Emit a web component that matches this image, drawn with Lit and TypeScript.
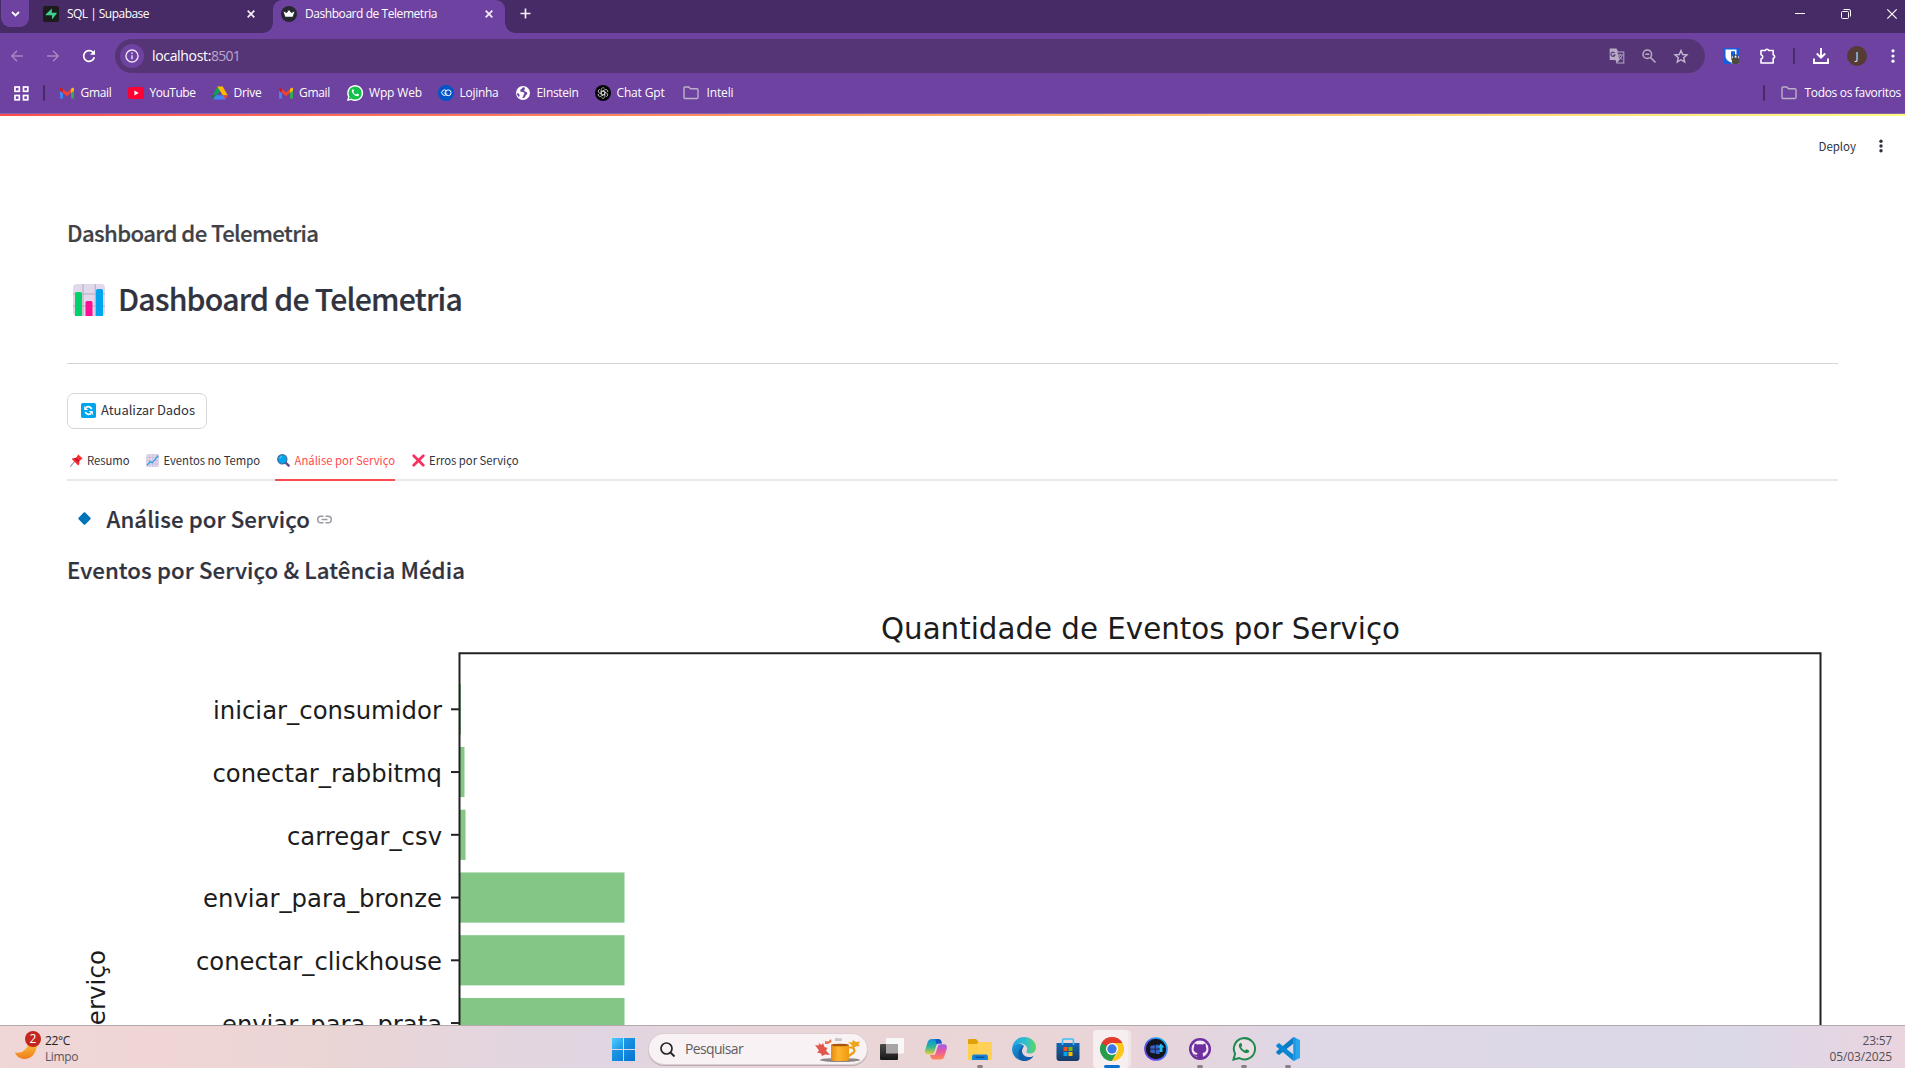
import { LitElement, html, svg, css } from "lit";
import { customElement, property } from "lit/decorators.js";

/** Single-line label whose tracking is tuned so that it spans a given width. */
@customElement("ui-label")
export class UiLabel extends LitElement {
  @property() text = "";
  @property({ type: Number }) span = 0;
  static styles = css`
    :host { display: inline-block; white-space: pre; flex: none; }
    .t { display: inline-block; }
  `;
  protected updated() {
    const el = this.renderRoot.querySelector(".t") as HTMLElement;
    if (!el || !this.span) return;
    el.style.letterSpacing = "0";
    const natural = el.getBoundingClientRect().width;
    const step = (this.span - natural) / Math.max(1, this.text.length);
    el.style.letterSpacing = step.toFixed(3) + "px";
  }
  render() {
    return html`<span class="t">${this.text}</span>`;
  }
}

const label = (text: string, span: number, cls = "") =>
  html`<ui-label class=${cls} .text=${text} .span=${span}></ui-label>`;

const box = (w: number, h: number, body: unknown, vb = `0 0 ${w} ${h}`) =>
  html`<svg class="ic" width=${w} height=${h} viewBox=${vb} fill="none">${body}</svg>`;

const closeX = box(8, 8, svg`<path d="M.7.7l6.600 6.600M7.300.7L.7 7.300" stroke="#f3eef8" stroke-width="1.700"/>`);

const gmail = box(16, 16, svg`
  <path d="M1 4v9.500h3V7.200z" fill="#4285f4"/><path d="M15 4v9.500h-3V7.200z" fill="#34a853"/>
  <path d="M1 3.600v2.200l3 2.300V4L3 3c-1-.6-2-.2-2 .6z" fill="#c5221f"/>
  <path d="M4 4l4 3.200L12 4v4.100l-4 3.100-4-3.100z" fill="#ea4335"/>
  <path d="M15 3.600v2.200l-3 2.300V4l1-1c1-.6 2-.2 2 .6z" fill="#fbbc04"/>`);
const youtube = box(16, 16, svg`<rect y="2" width="16" height="12" rx="2.800" fill="#ff0033"/><path d="M6.400 5.500v5L10.700 8z" fill="#fff"/>`);
const drive = box(16, 16, svg`
  <path d="M5.300 1.500h5.300L5.400 10.300.9 10.200z" fill="#0f9d58"/>
  <path d="M5.300 1.500h5.400l5 8.700h-5z" fill="#ffba00"/>
  <path d="M3.500 10.200h12.200L13.200 14.500H.9z" fill="#4285f4"/>
  <path d="M.9 10l2.600.2L.9 14.500-.2 12z" fill="#188038"/><path d="M10.700 10.200h5l-2.500 4.300z" fill="#ea4335"/>`);
const whatsapp = box(16, 16, svg`
  <path d="M0 16l1.100-4.200A8 8 0 1 1 4.200 15z" fill="#fff"/>
  <circle cx="8.100" cy="8" r="6.600" fill="#12c04a"/><path d="M1.700 14.400l.8-3 2.200 2.200z" fill="#12c04a"/>
  <path d="M5.700 4.300c-1.700 1.200-.8 3.300.9 5s4.100 2.900 5.300 1c.4-.8-.1-1-1.700-1.700-.6-.1-.7 1-1.300.8C7.600 8.900 6.700 8 6.400 7c0-.4.8-.8.7-1.200-.5-1.300-.6-1.700-1.400-1.500z" fill="#fff"/>`);
const lojinha = box(16, 16, svg`<circle cx="8" cy="8" r="8" fill="#0055c8"/>
  <path d="M8.600 6A2.700 2.700 0 1 0 8.300 9.600L9 8.500" stroke="#fff"/><circle cx="10.200" cy="7.800" r="2.900" stroke="#fff"/><path d="M5.800 8h2.600" stroke="#fff" stroke-width=".8"/>`);
const globe = box(16, 16, svg`<circle cx="8" cy="8" r="7" fill="#fff"/>
  <path d="M9 2c-2 .2-1.500 2-3 2.200-1 .3-1 2-.2 2.600 1.200.6 2.900-.2 3.500 1.300.3 1-.7 1.300-.8 2.100-.2 1.500-1 2-1.500 2.900 1.900.2 3.300-1 3.500-2.200.2-1 2-1.400 1.800-2.900-.3-1.600-2.300-1-3-2-.5-1 .8-1.600.6-2.500zM2 8c1.200.2 3 1.200 2.600 2.800-.3 1-1 1-1.300.6C2.500 10.500 2 9.400 2 8z" fill="#6e42a0"/>`);
const gpt = box(16, 16, svg`<circle cx="8" cy="8" r="8" fill="#050505"/>
  ${[0, 60, 120, 180, 240, 300].map(a => svg`<path d="M6.200 7V4.600a1.900 1.900 0 0 1 3.300-1.200M6.200 7L8 5.900l2.900 1.700" stroke="#d8d8d8" stroke-width=".75" transform="rotate(${a} 8 8)"/>`)}`);
const folder = box(16, 14, svg`<path d="M1 2.200C1 1.500 1.500 1 2.200 1h3.600l1.700 1.800h6.300c.7 0 1.200.5 1.200 1.200v7.300c0 .7-.5 1.200-1.200 1.200H2.200c-.7 0-1.200-.5-1.200-1.200z" stroke="#bdb0c9" stroke-width="1.400"/>`);

const BOOKMARKS = [
  { icon: gmail, text: "Gmail", at: 59, tx: 80.500, w: 31 },
  { icon: youtube, text: "YouTube", at: 128, tx: 149.500, w: 46 },
  { icon: drive, text: "Drive", at: 212, tx: 233.500, w: 28 },
  { icon: gmail, text: "Gmail", at: 278, tx: 299, w: 31 },
  { icon: whatsapp, text: "Wpp Web", at: 347, tx: 369, w: 53 },
  { icon: lojinha, text: "Lojinha", at: 438, tx: 459.500, w: 39 },
  { icon: globe, text: "EInstein", at: 515, tx: 536.500, w: 42 },
  { icon: gpt, text: "Chat Gpt", at: 595, tx: 616.500, w: 48 },
  { icon: folder, text: "Inteli", at: 683, tx: 706.500, w: 27 },
];

@customElement("browser-chrome")
export class BrowserChrome extends LitElement {
  static styles = css`
    :host { display: block; background: #6e42a0; color: #fff; font: 12px/16px "Open Sans", "Noto Sans", sans-serif; height: 113px; border-bottom: 1px solid #8a63b4; }
    .ic { display: block; flex: none; overflow: visible; }
    .strip { height: 33px; background: #462b66; display: flex; align-items: flex-start; }
    .drop { width: 28px; height: 27px; margin-left: 1px; border-radius: 0 0 9px 9px; background: #6e42a0; display: grid; place-items: center; }
    .tab { height: 27px; display: flex; align-items: center; }
    .idle { margin-left: 14px; width: 230px; }
    .idle ui-label { margin-left: 8px; }
    .idle .x { margin-left: 98px; }
    .active { position: relative; width: 232px; height: 33px; background: #6e42a0; border-radius: 9px 9px 0 0; align-items: flex-start; }
    .active::before, .active::after { content: ""; position: absolute; bottom: 0; width: 10px; height: 10px; }
    .active::before { left: -10px; background: radial-gradient(circle at 0 0, transparent 9.500px, #6e42a0 10px); }
    .active::after { right: -10px; background: radial-gradient(circle at 100% 0, transparent 9.500px, #6e42a0 10px); }
    .inner { height: 27px; display: flex; align-items: center; margin-left: 8px; }
    .inner ui-label { margin-left: 8px; }
    .inner .x { margin-left: 48px; }
    .plus { height: 26px; display: flex; align-items: center; margin-left: 14.500px; }
    .grow { flex: 1; }
    .win { height: 27px; display: flex; align-items: center; gap: 36px; padding-right: 8px; }
    .bar { height: 46px; display: flex; align-items: center; }
    .nav { display: flex; gap: 22px; margin-left: 10px; width: 105px; }
    .omni { width: 1590px; height: 34px; border-radius: 17px; background: #563577; display: flex; align-items: center; box-sizing: border-box; padding: 0 17px 0 5px; }
    .info { width: 24px; height: 24px; border-radius: 50%; background: #6e42a0; display: grid; place-items: center; margin-right: 8px; }
    .url { font-size: 14px; line-height: 20px; }
    .dim { color: #b9a5cc; }
    .oi { display: flex; align-items: center; gap: 17px; }
    .tools { display: flex; align-items: center; flex: 1; margin-left: 18px; }
    .sep { width: 2px; height: 16px; background: #462b66; border-radius: 1px; }
    .avatar { width: 20px; height: 20px; border-radius: 50%; background: #543b33; font-size: 11px; text-align: center; line-height: 20px; color: #eee; }
    .marks { height: 28px; display: grid; grid-template-columns: 59px 1fr auto; align-items: center; }
    .lead { display: flex; align-items: center; padding-left: 13.500px; gap: 14px; }
    .list { display: flex; align-items: center; }
    .mark { display: flex; align-items: center; }
    .all { display: flex; align-items: center; padding-right: 4px; gap: 8px; }
    .all .sep { margin-right: 8px; }
  `;
  render() {
    return html`
      <div class="strip">
        <div class="drop">${box(9, 6, svg`<path d="M1 1l3.500 3.500L8 1" stroke="#fff" stroke-width="1.800"/>`)}</div>
        <div class="tab idle">
          ${box(16, 16, svg`<rect width="16" height="16" rx="2" fill="#1c1c1c"/><path d="M8.800 2.500v4.200h4.200c.7 0 .9.6.6 1L9 13.500V9.300H3.500c-.7 0-1-.6-.6-1.100z" fill="#3ecf8e"/>`)}
          ${label("SQL | Supabase", 82)}<span class="x">${closeX}</span>
        </div>
        <div class="tab active"><div class="inner">
          ${box(16, 16, svg`<circle cx="8" cy="8" r="8" fill="#262730"/><path d="M2.500 5.500L5.700 7 8 4l2.300 3 3.200-1.500-1.800 5.200H4.300z" fill="#fff"/>`)}
          ${label("Dashboard de Telemetria", 132)}<span class="x">${closeX}</span>
        </div></div>
        <div class="plus">${box(11, 11, svg`<path d="M5.500.5v10M.5 5.500h10" stroke="#f3eef8" stroke-width="1.700"/>`)}</div>
        <div class="grow"></div>
        <div class="win">
          ${box(10, 10, svg`<path d="M0 4.500h10" stroke="#fff"/>`)}
          ${box(10, 10, svg`<rect x=".5" y="2.500" width="7" height="7" rx="1" stroke="#fff"/><path d="M2.500.5H8A1.500 1.500 0 0 1 9.500 2v5.500" stroke="#fff"/>`)}
          ${box(10, 10, svg`<path d="M.3.3l9.400 9.400M9.700.3L.3 9.700" stroke="#fff" stroke-width="1.200"/>`)}
        </div>
      </div>
      <div class="bar">
        <div class="nav">
          ${box(14, 14, svg`<path d="M13 7H2M7 1.800L1.800 7 7 12.200" stroke="#a486c4" stroke-width="1.500"/>`)}
          ${box(14, 14, svg`<path d="M1 7h11M7 1.800L12.200 7 7 12.200" stroke="#a486c4" stroke-width="1.500"/>`)}
          ${box(14, 14, svg`<path d="M12.300 8.300A5.400 5.400 0 1 1 10.900 3.200L12 4.300" stroke="#fff" stroke-width="1.700"/><path d="M13 .8v5H8z" fill="#fff"/>`)}
        </div>
        <div class="omni">
          <div class="info">${box(14, 14, svg`<circle cx="7" cy="7" r="6" stroke="#ece4f4" stroke-width="1.400"/><path d="M7 6.200v4M7 3.600v1.400" stroke="#ece4f4" stroke-width="1.400"/>`)}</div>
          ${label("localhost:", 59, "url")}${label("8501", 29, "url dim")}
          <div class="grow"></div>
          <div class="oi">
            ${box(16, 16, svg`<path d="M.7.5h6.800l1.500 3h6.300v12H7.500L6.500 12H.7z" fill="#b9abc6"/><path d="M8.500 4.500h5.800v9.900H8.200L10.500 12z" fill="#563577"/><path d="M5.700 5A2.100 2.100 0 1 0 6 7H4.200" stroke="#563577" stroke-width="1.100"/><path d="M9 7h5M11.500 6v1M10 7.500c.5 1.800 1.700 3 3.300 4M13 7.500c-.4 1.800-1.300 3-3 4" stroke="#b9abc6"/>`)}
            ${box(14, 14, svg`<circle cx="5.300" cy="5.300" r="4.300" stroke="#b9abc6" stroke-width="1.500"/><path d="M3.300 5.300h4M8.500 8.500l5 5" stroke="#b9abc6" stroke-width="1.600"/>`)}
            ${box(15, 15, svg`<path d="M8 1.500l1.700 4 4.300.4-3.300 2.800 1 4.300L8 10.700 4.300 13l1-4.300L2 5.900l4.300-.4z" stroke="#c3b6cf" stroke-width="1.400"/>`)}
          </div>
        </div>
        <div class="tools">
          ${box(16, 16, svg`<rect width="16" height="16" rx="1" fill="#175ddc"/><path d="M2.500 1.500h11V8c0 3.500-3 5.500-5.500 6.500C5.500 13.500 2.500 11.500 2.500 8z" fill="#fff"/><path d="M8 3.200h4V8c0 2-2 3.500-4 4.600z" fill="#175ddc"/><path d="M8.700 8.500h7.300v7.500H8.700z" fill="#fff"/><rect x="9" y="9.500" width="7" height="6.500" rx="1" fill="#4a4a42"/><path d="M10.700 10V8.700a1.800 1.800 0 0 1 3.600 0V10" stroke="#4a4a42" stroke-width="1.400"/>`)}
          <span style="width:21px"></span>
          ${box(16, 16, svg`<path d="M1 2.500h4.200a1.900 1.900 0 0 1 3.600 0h4.400v4.200a1.900 1.900 0 0 1 0 3.700V15H1v-4a2.200 2.200 0 0 0 0-4.300z" stroke="#fff" stroke-width="1.600" stroke-linejoin="round"/>`)}
          <span style="width:17px"></span><div class="sep"></div><span style="width:18px"></span>
          ${box(16, 16, svg`<path d="M8 0v9M3.800 5.500L8 9.700l4.200-4.200M1 10.500V15h14v-4.500" stroke="#fff" stroke-width="1.900"/>`)}
          <span style="width:18px"></span><div class="avatar">J</div>
          <span style="width:24px"></span>
          ${box(4, 14, svg`<circle cx="2" cy="1.800" r="1.600" fill="#fff"/><circle cx="2" cy="7" r="1.600" fill="#fff"/><circle cx="2" cy="12.200" r="1.600" fill="#fff"/>`)}
        </div>
      </div>
      <div class="marks">
        <div class="lead">
          ${box(15, 15, svg`${[[1, 1], [9.5, 1], [1, 9.5], [9.5, 9.5]].map(p => svg`<rect x=${p[0]} y=${p[1]} width="4.300" height="4.300" stroke="#fff" stroke-width="1.700"/>`)}`)}
          <div class="sep"></div>
        </div>
        <div class="list">
          ${BOOKMARKS.map((b, i) => {
            const next = BOOKMARKS[i + 1]?.at ?? b.tx + b.w;
            return html`<div class="mark" style="width:${next - b.at}px;gap:${b.tx - b.at - 16}px">${b.icon}${label(b.text, b.w)}</div>`;
          })}
        </div>
        <div class="all"><div class="sep"></div>${folder}${label("Todos os favoritos", 96.5)}</div>
      </div>`;
  }
}

const pin = box(13, 13, svg`<path d="M5.500 6.500L.3 12.700" stroke="#9b8fb0" stroke-width="1.100"/><path d="M8 .3l4.700 4.200-1.300.8-1.900 1.900-.3 3.300-1 .9L1.700 5l1-.7 3-.3 1.900-2.200z" fill="#f8312f"/><path d="M4 4.400l4.500 4.400.6-2.200L6 3.800z" fill="#ca0b4a"/>`);
const trend = box(13, 13, svg`<rect width="13" height="13" rx="1.500" fill="#e1d8ec"/><path d="M3.500 0v13M6.700 0v13M10 0v13M0 3.500h13M0 6.700h13M0 10h13" stroke="#c3b4d4" stroke-width=".6"/><path d="M1 11.500L4 7.600 6.300 8.800 12.300 1.500" stroke="#26a0e8" stroke-width="1.200"/>`);
const lens = box(13, 13, svg`<path d="M8.300 8.300l3.400 3.400" stroke="#6b4a86" stroke-width="2.400" stroke-linecap="round"/><circle cx="5.300" cy="5.300" r="4.600" fill="#00a6ed" stroke="#3b6c9e" stroke-width="1.200"/><path d="M2.700 4.600A3 3 0 0 1 5 2.500" stroke="#8fd8ff"/>`);
const cross = box(13, 13, svg`<path d="M1.700 1.700l9.600 9.600M11.300 1.700l-9.600 9.600" stroke="#f92f60" stroke-width="2.700" stroke-linecap="round"/>`);

const TABS = [
  { icon: pin, text: "Resumo", w: 42.5, lead: 3, gap: 4, width: 79, on: false },
  { icon: trend, text: "Eventos no Tempo", w: 96.5, lead: 0, gap: 4.5, width: 129, on: false },
  { icon: lens, text: "Análise por Serviço", w: 100.5, lead: 2, gap: 4.5, width: 120, on: true },
  { icon: cross, text: "Erros por Serviço", w: 89.5, lead: 16.5, gap: 4.5, width: 140, on: false },
];

const ROWS = [
  { name: "iniciar_consumidor", w: 228, end: 461 },
  { name: "conectar_rabbitmq", w: 228.500, end: 464.5 },
  { name: "carregar_csv", w: 154, end: 465.5 },
  { name: "enviar_para_bronze", w: 238, end: 624.5 },
  { name: "conectar_clickhouse", w: 245, end: 624.5 },
  { name: "enviar_para_prata", w: 219, end: 624.5 },
];

@customElement("telemetry-page")
export class TelemetryPage extends LitElement {
  static styles = css`
    :host { display: block; height: 911px; overflow: hidden; background: #fff; color: #31333f; font-family: "Noto Sans CJK JP", "Noto Sans", sans-serif; }
    .ic { display: block; flex: none; overflow: visible; }
    .glow { height: 2px; background: linear-gradient(90deg, #ff4b4b, #fffd80); }
    header { height: 59px; display: flex; align-items: center; justify-content: flex-end; padding-right: 22px; gap: 23px; font-size: 11.500px; line-height: 16px; }
    main { padding: 41px 67px 0; }
    .row { display: flex; align-items: center; }
    .head { font-weight: 500; -webkit-text-stroke: .2px currentColor; }
    .top { height: 33px; font-size: 22.200px; line-height: 33px; color: #414246; }
    h1, h2, h3 { margin: 0; font-weight: 500; }
    h1 { height: 40px; margin-top: 29px; font-size: 30.200px; line-height: 40px; padding-left: 6px; gap: 13px; }
    h1 .ic { margin-top: 3px; }
    hr { border: 0; height: 1px; margin: 45px 0 29px; background: #d6d6d9; }
    button { display: flex; align-items: center; gap: 5px; box-sizing: border-box; width: 140px; height: 36px; border: 1px solid #d6d6d9; border-radius: 7px; background: #fff; padding: 0 0 1px 13px; font: 13px/20px "Noto Sans CJK JP", sans-serif; color: #31333f; }
    button ui-label { margin-top: -2px; }
    .tabs { margin-top: 12px; height: 38px; display: flex; border-bottom: 2px solid #e9e9eb; font-size: 11.300px; line-height: 16px; }
    .tab { display: flex; align-items: center; box-sizing: border-box; height: 40px; padding-bottom: 2px; }
    .on { color: #ff4b4b; border-bottom: 2px solid #ff4b4b; padding-bottom: 0; }
    h2, h3 { font-size: 22.200px; }
    h2 { margin-top: 17px; height: 40px; line-height: 40px; padding-left: 11px; }
    h2 ui-label { margin: 0 7px 0 15.500px; }
    h2 .ic:last-child { margin-top: 2px; }
    h3 { margin-top: 11px; height: 40px; line-height: 40px; }
    .plot { display: block; margin-top: -1px; font-family: "DejaVu Sans", sans-serif; }
  `;
  render() {
    const y0 = 709.300, step = 62.750;
    return html`
      <div class="glow"></div>
      <header>${label("Deploy", 37.5)}${box(4, 14, svg`<circle cx="2" cy="2.300" r="1.700" fill="#31333f"/><circle cx="2" cy="7" r="1.700" fill="#31333f"/><circle cx="2" cy="11.700" r="1.700" fill="#31333f"/>`)}</header>
      <main>
        <div class="row head top">${label("Dashboard de Telemetria", 251.5)}</div>
        <h1 class="row head">
          ${box(32, 32, svg`<rect width="32" height="32" rx="4" fill="#e1d8ec"/><path d="M10 0v32M22.300 0v32M0 10h32M0 22h32" stroke="#b4acbc" stroke-width="1"/>
            <path d="M2 32V9.500Q2 8 3.500 8h4Q9 8 9 9.500V32z" fill="#00d26a"/><path d="M12.500 32V18.500q0-1.500 1.500-1.500h4q1.500 0 1.500 1.500V32z" fill="#fc0f92"/><path d="M23 32V6.500Q23 5 24.500 5h4Q30 5 30 6.500V32z" fill="#00a6ed"/>`)}
          ${label("Dashboard de Telemetria", 344)}
        </h1>
        <hr />
        <button>${box(15, 15, svg`<rect width="15" height="15" rx="1.800" fill="#00a6ed"/><path d="M4.300 8.800A3.600 3.600 0 0 0 10 10.500M10.700 6.200A3.600 3.600 0 0 0 5 4.500" stroke="#fff" stroke-width="1.700"/><path d="M3.200 3v4h4zM11.800 12V8h-4z" fill="#fff"/>`)}${label("Atualizar Dados", 94)}</button>
        <div class="tabs">
          ${TABS.map(t => html`<div class="tab ${t.on ? "on" : ""}" style="width:${t.width}px;padding-left:${t.lead}px;gap:${t.gap}px">${t.icon}${label(t.text, t.w)}</div>`)}
        </div>
        <h2 class="row head">
          ${box(13, 13, svg`<path d="M5.700.6q.8-.8 1.600 0l5.100 5.100q.8.8 0 1.600l-5.100 5.100q-.8.8-1.600 0L.6 7.300q-.8-.8 0-1.600z" fill="#0074ba"/>`)}
          ${label("Análise por Serviço", 203.5)}
          ${box(15, 9, svg`<path d="M6.500 1.200H4a3.300 3.300 0 0 0 0 6.600h2.500M8.500 1.200H11a3.300 3.300 0 0 1 0 6.600H8.500M4.500 4.500h6" stroke="#9a9ba2" stroke-width="1.500"/>`)}
        </h2>
        <h3 class="row head">${label("Eventos por Serviço & Latência Média", 398)}</h3>
        <svg class="plot" width="1771" height="437" viewBox="67 588 1771 437">
          <g fill="#1c1c1c" font-size="24.600">
            <text x="881" y="639" font-size="29.700" textLength="519" lengthAdjust="spacingAndGlyphs">Quantidade de Eventos por Serviço</text>
            <text transform="translate(105 950) rotate(-90)" text-anchor="end">Serviço</text>
            ${ROWS.map((r, i) => {
              const y = y0 + i * step;
              return svg`
                <rect x="459.500" y=${y - 25.1} width=${r.end - 459.5} height="50.200" fill="#83c686"/>
                <path d="M451 ${y}h8" stroke="#222" stroke-width="2"/>
                <text x="442" y=${y + 9.8} text-anchor="end" textLength=${r.w + 1} lengthAdjust="spacingAndGlyphs">${r.name}</text>`;
            })}
          </g>
          <path d="M459.500 1030V653.300H1820.500V1030" stroke="#222" stroke-width="2" fill="none"/>
        </svg>
      </main>`;
  }
}

const APPS = [
  { mark: "", icon: box(24, 22, svg`<defs><linearGradient id="tvd" x2="0" y2="1"><stop stop-color="#4c4c4c"/><stop offset="1" stop-color="#151515"/></linearGradient></defs><rect x="6" width="18" height="15.500" rx="1" fill="#f8f8f8"/><rect y="6" width="18" height="16" rx="1" fill="url(#tvd)"/><rect x="6" y="6" width="12" height="9.500" fill="#a8a4a5"/>`) },
  { mark: "", icon: box(22, 21, svg`<defs><linearGradient id="cpa" x2="0" y2="1"><stop stop-color="#0a8fe0"/><stop offset=".5" stop-color="#2bb59a"/><stop offset="1" stop-color="#e8cf30"/></linearGradient><linearGradient id="cpb" x2="0" y2="1"><stop stop-color="#9a5cf0"/><stop offset=".5" stop-color="#ee5a9a"/><stop offset="1" stop-color="#ff8a50"/></linearGradient></defs>
      <path d="M7 0h6.500c1.600 0 2.300 1 2.700 2.200l.7 2.300h-3c-1.500 0-2.200.7-2.700 2.300L9.300 13c-.5 1.500-1.200 2.300-2.800 2.300H3C.5 15.300-.3 13.300.2 11L2.600 3.300C3.200 1.200 4.700 0 7 0z" fill="url(#cpa)"/>
      <path d="M15 20.500H8.500c-1.600 0-2.300-1-2.700-2.200L5.100 16h3c1.500 0 2.200-.7 2.700-2.300l1.900-6.200c.5-1.500 1.200-2.300 2.800-2.300H19c2.500 0 3.300 2 2.800 4.300l-2.400 7.700c-.6 2.100-2.100 3.300-4.400 3.300z" fill="url(#cpb)"/><path d="M10 0h3.500c1.600 0 2.300 1 2.700 2.200l.7 2.300h-3c-.9 0-1.500.3-2 1z" fill="#1a55c8"/>`) },
  { mark: "dot", icon: box(24, 22, svg`<path d="M0 2Q0 1 1 1h7l2.500 3H23q1 0 1 1v4H0z" fill="#e0a106"/><path d="M0 6h9l2-2h12q1 0 1 1v16q0 1-1 1H0z" fill="#ffd257"/><path d="M0 6h9l1-1v17H0z" fill="#ffd04c"/><path d="M4 22v-3.500Q4 16.500 6 16.500h12q2 0 2 2V22z" fill="#1583d6"/><path d="M7.500 19.300h9" stroke="#0a4f9b" stroke-width="1.500"/>`) },
  { mark: "", icon: box(24, 24, svg`<defs><linearGradient id="eda" x2="1"><stop stop-color="#1ba3e8"/><stop offset=".6" stop-color="#35c1c8"/><stop offset="1" stop-color="#5fd85a"/></linearGradient><linearGradient id="edb" x2="1" y2="1"><stop stop-color="#1b9de2"/><stop offset="1" stop-color="#0c4d94"/></linearGradient></defs>
      <path d="M0 12A12 12 0 0 0 21.500 19.200C18 21 11 20.500 10 14.500 9.500 11 12 9 12 9 9 5 1 5.500 0 12z" fill="url(#edb)"/><path d="M0 12C.5 4.500 6 0 12 0c8 0 12 5.500 12 10.500 0 4-3 6-6.300 6-2.700 0-3.800-1-3.200-1.900 1.600-2 1-6.500-4.500-8C5 6 1 8 0 12z" fill="url(#eda)"/><path d="M10 14.500c0 5 5 8 11.500 4.700-3 4.300-8 5.500-11.500 4.300C5.500 21 5 15 9 10.500c1-.9 2-1.200 3-1.500-1.300 1.500-2 3-2 5.500z" fill="#0f5eab"/>`) },
  { mark: "", icon: box(24, 23, svg`<defs><linearGradient id="sta" x2="0" y2="1"><stop stop-color="#1267b4"/><stop offset="1" stop-color="#183a66"/></linearGradient></defs><path d="M6.500 7V2.500Q6.500 1 8 1h8q1.500 0 1.500 1.500V7" stroke="#3cc0f5" stroke-width="1.700"/><path d="M.5 5h23v15q0 3-3 3h-17q-3 0-3-3z" fill="url(#sta)"/><path d="M6.500 5v2M17.500 5v2" stroke="#3cc0f5" stroke-width="1.700"/><path d="M7.500 9h4v4h-4z" fill="#f25022"/><path d="M12.500 9h4v4h-4z" fill="#7fba00"/><path d="M7.500 14h4v4h-4z" fill="#00a4ef"/><path d="M12.500 14h4v4h-4z" fill="#ffb900"/>`) },
  { mark: "wide", icon: box(24, 24, svg`<path d="M12 12L1.600 6A12 12 0 0 1 22.400 6z" fill="#e33b2e"/><path d="M12 12L1.600 6A12 12 0 0 0 12 24l5.200-9z" fill="#259d4c"/><path d="M12 12l5.200 3L12 24A12 12 0 0 0 22.400 6H12z" fill="#fcc61c"/><path d="M1.600 6l5.200 9L12 12V6z" fill="#259d4c"/><path d="M1.600 6A12 12 0 0 1 22.400 6H12L6.500 9z" fill="#e33b2e"/><circle cx="12" cy="12" r="6" fill="#fff"/><circle cx="12" cy="12" r="4.700" fill="#3b78e7"/>`) },
  { mark: "", icon: box(24, 24, svg`<defs><linearGradient id="rga" x1="0" y1="1" x2="1" y2="0"><stop stop-color="#7a35f0"/><stop offset=".5" stop-color="#3f68f0"/><stop offset="1" stop-color="#19c4f0"/></linearGradient></defs><circle cx="12" cy="12" r="11" fill="#14141c" stroke="url(#rga)" stroke-width="1.700"/><path d="M6.300 9l4.500-1v3.800H6.300zM6.300 12.600h4.500v3.900l-4.500-1zM11.600 7.900l3-.5v4.400h-3zM11.600 12.600h4v4.600l-4-.6z" fill="#3b62c8"/><path d="M17 6.500l3.500 4h-2V15h-3v-4.500h-2z" fill="#21b8f4"/>`) },
  { mark: "dot", icon: box(22, 22, svg`<circle cx="11" cy="11" r="11" fill="#6f2f9f"/><circle cx="11" cy="11" r="8.500" fill="#f2e8f6"/><path d="M5.500 5.200l2.700 1.300q2.800-.7 5.600 0l2.700-1.300.3 3.500c1.400 3 .3 5.700-3.300 6.400l.4 1.500v3.300H8.100v-2c-1.800.3-2.300-.4-3.200-2 1.500 0 1.600 1.200 3.200.7l.4-1.500c-3.600-.7-4.700-3.400-3.300-6.400z" fill="#6f2f9f"/>`) },
  { mark: "dot", icon: box(24, 24, svg`<path d="M1.500 22.500l1.600-5.800A10.600 10.600 0 1 1 7.300 21z" stroke="#1d8a50" stroke-width="2" fill="#ecdfe4"/><path d="M8 6.200c-2.200 1.600-1 4.800 1.500 7.200s5.800 4 7.600 1.300c.6-1.200-.3-1.400-2.400-2.400-.9-.2-1.200 1.300-2 1.100-1.700-.6-3-1.800-3.500-3.300-.1-.7 1.200-1.200 1-1.900C9.400 6.100 9.300 5.900 8 6.200z" fill="#1d8a50"/>`) },
  { mark: "dot", icon: box(24, 24, svg`<path d="M17.500 0L24 3v18l-6.500 3z" fill="#29a7ec"/><path d="M17.500 0v6.500L3 18 .3 16v-1.500z" fill="#0b7bc4"/><path d="M17.500 24v-6.500L3 6 .3 8v1.500z" fill="#0a87d4"/><path d="M17.500 0l2 1v22l-2 1z" fill="#1c93de"/>`) },
];

@customElement("task-bar")
export class TaskBar extends LitElement {
  static styles = css`
    :host { display: grid; grid-template-columns: 601px 1fr auto; height: 43px; box-sizing: border-box; overflow: hidden; border-top: 1px solid #b3a9ad;
      background: linear-gradient(90deg, #efd6d7 0, #efd5d6 180px, #ead5d5 340px, #e4d5de 480px, #e0d5e2 600px, #e9d5da 740px, #ead5d6 900px, #e9d4d8 1120px, #dfd7e5 1290px, #dbd8e7 1740px, #e3d6e4 1820px, #ead4de 1905px);
      font: 12px/16px "Open Sans", "Noto Sans", sans-serif; color: #222; }
    .ic { display: block; flex: none; overflow: visible; }
    .weather { display: flex; padding: 7px 0 0 15px; gap: 8px; }
    .moon { position: relative; width: 22px; height: 30px; padding-top: 7px; box-sizing: border-box; }
    .badge { position: absolute; left: 10px; top: -2px; width: 16px; height: 16px; border-radius: 50%; background: #c4271d; color: #fff; text-align: center; }
    .lines { display: flex; flex-direction: column; }
    .soft { color: #5d5558; }
    .apps { display: flex; align-items: center; padding-top: 4px; }
    .cell { position: relative; width: 44px; height: 38px; display: grid; place-items: center; }
    .wide { z-index: 0; }
    .wide::before { content: ""; position: absolute; z-index: -1; left: 3px; top: 0; width: 35px; height: 38px; border-radius: 4px; background: #f7eeef; box-shadow: 3px 0 0 #f1e6e8; }
    .dot::after, .wide::after { content: ""; position: absolute; left: 19px; bottom: 0; width: 6px; height: 3px; border-radius: 2px; background: #8a8084; }
    .wide::after { left: 14px; width: 16px; background: #0b70cf; }
    .find { width: 218px; height: 30px; margin: 0 3px 0 4px; border-radius: 16px; background: #f8f2f4; box-shadow: 0 0 0 1px #dccfd3, 0 1px 0 1px #b9adb2; display: flex; align-items: center; box-sizing: border-box; padding: 0 6px 0 11px; }
    .find ui-label { font-size: 14px; line-height: 20px; color: #605c60; margin-left: 10px; flex: 1; }
    .clock { display: flex; flex-direction: column; align-items: flex-end; padding: 7px 13px 0 0; color: #544f55; }
  `;
  render() {
    return html`
      <div class="weather">
        <div class="moon">${box(22, 19, svg`<defs><linearGradient id="mn" x2="0" y2="1"><stop stop-color="#ffc93c"/><stop offset="1" stop-color="#ef7d1c"/></linearGradient></defs><path d="M14 0h8c1 10-4 19-12 19C5 19 1.500 16.500 0 12.500 7 14 14 9 14 0z" fill="url(#mn)"/>`)}<span class="badge">2</span></div>
        <div class="lines">${label("22°C", 25)}${label("Limpo", 33, "soft")}</div>
      </div>
      <div class="apps">
        <div class="cell">${box(23, 23, svg`<defs><linearGradient id="wl" x2="1" y2="1"><stop stop-color="#4fcdfd"/><stop offset="1" stop-color="#1793e6"/></linearGradient><linearGradient id="wk" x2="1" y2="1"><stop stop-color="#27a9ee"/><stop offset="1" stop-color="#0672d2"/></linearGradient></defs><path d="M0 0h11v11H0z" fill="url(#wl)"/><path d="M12 0h11v11H12zM0 12h11v11H0zM12 12h11v11H12z" fill="url(#wk)"/>`)}</div>
        <div class="find">
          ${box(15, 15, svg`<circle cx="6.500" cy="6.500" r="5.500" stroke="#26262a" stroke-width="1.700"/><path d="M10.500 10.500l4 4" stroke="#26262a" stroke-width="2"/>`)}
          ${label("Pesquisar", 58)}
          ${box(46, 25, svg`
            <defs><linearGradient id="mug" x2="1"><stop stop-color="#e58a10"/><stop offset=".4" stop-color="#ffb52e"/><stop offset="1" stop-color="#f09a10"/></linearGradient></defs>
            <ellipse cx="25" cy="23" rx="20" ry="2" fill="#8f8486"/>
            <path d="M0 8l4 .5L3.500 6l3 2 1.500-2 1.500 4 3 1-1.500 2.500 4 4.500-5-.5-3 1.500-1-2.500-4-1 2-2z" fill="#e2574c"/><path d="M10 4l3 .4L16 2l.5 3L13 7l-3 0z" fill="#e8734c"/>
            <path d="M33 5l4 .5L38 3l3 2 4-.5-1.500 3L45 9l-4 .5L37 12l.5-3z" fill="#eba51d"/>
            <path d="M20 4c-1-3 2-4 3.500-2.500C26 0 28 2 26.500 4z" fill="#c9c5c7"/>
            <path d="M33 10.500h3.500a3 3 0 0 1 1.500 5.500l-5 3.500" stroke="#eb9c18" stroke-width="2.200"/><path d="M16 8h18v13q0 3-3 3H19q-3 0-3-3z" fill="url(#mug)"/><ellipse cx="25" cy="8" rx="9" ry="1.300" fill="#a8550f"/>`)}
        </div>
        ${APPS.map(a => html`<div class="cell ${a.mark}">${a.icon}</div>`)}
      </div>
      <div class="clock">${label("23:57", 29.5)}${label("05/03/2025", 62.5)}</div>`;
  }
}

@customElement("app-root")
export class AppRoot extends LitElement {
  static styles = css`
    :host { display: flex; flex-direction: column; width: 1905px; height: 1068px; overflow: hidden; background: #fff; }
  `;
  render() {
    return html`<browser-chrome></browser-chrome><telemetry-page></telemetry-page><task-bar></task-bar>`;
  }
}
